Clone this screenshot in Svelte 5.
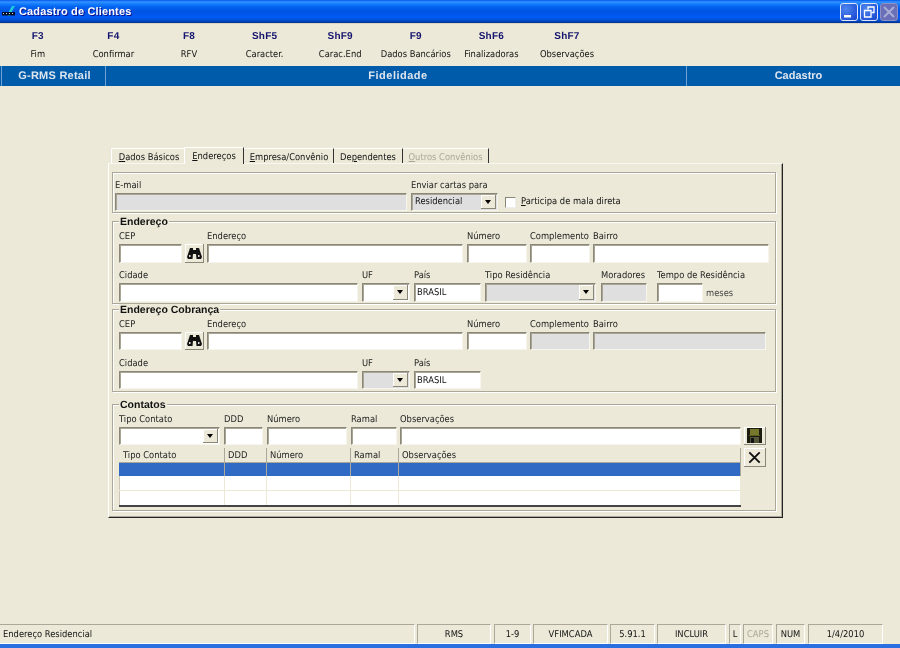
<script>
  const keys = [['F3','Fim'],['F4','Confirmar'],['F8','RFV'],['ShF5','Caracter.'],['ShF9','Carac.End'],['F9','Dados Bancários'],['ShF6','Finalizadoras'],['ShF7','Observações']];
  const base = 119;
  const addr1 = [
    {l:'CEP',x:119,w:63},{k:'find',x:185,w:19},{l:'Endereço',x:207,w:256},{l:'Número',x:467,w:60},{l:'Complemento',x:530,w:60},{l:'Bairro',x:593,w:176}
  ];
  const addr2 = [
    {l:'Cidade',x:119,w:239},{l:'UF',x:362,w:48,k:'combo'},{l:'País',x:414,w:67,v:'BRASIL'},{l:'Tipo Residência',x:485,w:111,k:'combo',d:true},{l:'Moradores',x:601,w:46,d:true},{l:'Tempo de Residência',x:657,w:46},{k:'unit',x:706,w:30,v:'meses'}
  ];
  const cob1 = [
    {l:'CEP',x:119,w:63},{k:'find',x:185,w:19},{l:'Endereço',x:207,w:256},{l:'Número',x:467,w:60},{l:'Complemento',x:530,w:60,d:true},{l:'Bairro',x:593,w:173,d:true}
  ];
  const cob2 = [
    {l:'Cidade',x:119,w:239},{l:'UF',x:362,w:48,k:'combo',d:true},{l:'País',x:414,w:67,v:'BRASIL'}
  ];
  const cont = [
    {l:'Tipo Contato',x:119,w:101,k:'combo'},{l:'DDD',x:224,w:39},{l:'Número',x:267,w:80},{l:'Ramal',x:351,w:46},{l:'Observações',x:400,w:341},{k:'save',x:744,w:22}
  ];
  const cols = [['Tipo Contato',106],['DDD',42],['Número',84],['Ramal',48],['Observações',342]];
  const status = [['RMS',74],['1-9',37],['VFIMCADA',75],['5.91.1',45],['INCLUIR',69],['L',12],['CAPS',30,true],['NUM',29],['1/4/2010',75]];
  const gaps = [2,3,2,2,2,3,2,3,3];
  function offset(row, i, start = base) {
    const prev = i === 0 ? start : row[i-1].x + row[i-1].w;
    return row[i].x - prev;
  }
</script>

{#snippet binoculars()}
  <svg width="15" height="13" viewBox="0 0 15 13">
    <path d="M3 1h3v2h3V1h3l1 3 2 6-1 2H9.500L9 7H6l-.5 5H1L0 10l2-6z" fill="#111"/>
    <path d="M2 8h1.500v2H2zM11 8h1.500v2H11z" fill="#ddd"/>
  </svg>
{/snippet}

{#snippet row(items, start = base)}
  <div class="row">
    {#each items as f, i}
      <div class="field" style="margin-left:{offset(items, i, start)}px;width:{f.w}px">
        <div class="lab">{f.l ?? ''}</div>
        {#if f.k === 'find'}
          <div class="btn find">{@render binoculars()}</div>
        {:else if f.k === 'save'}
          <div class="btn save">
            <svg width="15" height="15" viewBox="0 0 15 15">
              <path d="M0 0h15v15H0z" fill="#1c1c10"/>
              <path d="M3 1h9v6H3z" fill="#78782c"/>
              <path d="M2 7h11v1H2z" fill="#5c5c20"/>
              <path d="M3 9h9v6H3z" fill="#55553a"/>
              <path d="M4 10h3v5H4z" fill="#111"/>
            </svg>
          </div>
        {:else if f.k === 'unit'}
          <div class="unit">{f.v}</div>
        {:else if f.k === 'combo'}
          <div class="input combo" class:dis={f.d}><span class="arrowbox"><i></i></span></div>
        {:else}
          <div class="input" class:dis={f.d}>{f.v ?? ''}</div>
        {/if}
      </div>
    {/each}
  </div>
{/snippet}

<div class="win">
  <header class="title">
    <svg class="logo" width="16" height="18" viewBox="0 0 16 18">
      <path d="M7 10L11 3h3L10 10l-1 3H7z" fill="#20c8d8"/>
      <path d="M1 9h13v3.500H1z" fill="#08102c"/>
      <path d="M2 10h1v1H2zM5 10h1v1H5zM8 10h1v1H8zM11 10h1v1h-1z" fill="#c8dcea"/>
    </svg>
    <span class="ttext">Cadastro de Clientes</span>
    <div class="wbtns">
      <div class="wb"><svg width="18" height="18" viewBox="0 0 18 18"><path d="M4 12h7v2.500H4z" fill="#fff"/></svg></div>
      <div class="wb"><svg width="18" height="18" viewBox="0 0 18 18"><g fill="none" stroke="#fff" stroke-width="1.300"><path d="M8 6.500V4h6v5.500h-2.500"/><path d="M4.500 7.500H11V14H4.500z"/></g></svg></div>
      <div class="wb off"><svg width="18" height="18" viewBox="0 0 18 18"><path d="M4 4l10 10M14 4L4 14" stroke="#a9acd4" stroke-width="2"/></svg></div>
    </div>
  </header>

  <nav class="tools">
    {#each keys as [k, c]}
      <div class="tool"><b>{k}</b><span>{c}</span></div>
    {/each}
  </nav>

  <div class="bar">
    <div class="bc b1">G-RMS Retail</div>
    <div class="bc b2">Fidelidade</div>
    <div class="bc b3">Cadastro</div>
  </div>

  <main class="main">
    <div class="tabs">
      <div class="tab t1"><u>D</u>ados Básicos</div>
      <div class="tab t2 on"><u>E</u>ndereços</div>
      <div class="tab t3"><u>E</u>mpresa/Convênio</div>
      <div class="tab t4">De<u>p</u>endentes</div>
      <div class="tab t5 off"><u>O</u>utros Convênios</div>
    </div>
    <section class="panel">
      <div class="group g-mail">
        <div class="mailrow">
          <div class="field f-mail"><div class="lab">E-mail</div><div class="input dis"></div></div>
          <div class="field f-env"><div class="lab">Enviar cartas para</div><div class="input combo dis val">Residencial<span class="arrowbox"><i></i></span></div></div>
          <div class="chk"><span class="box"></span><span><u>P</u>articipa de mala direta</span></div>
        </div>
      </div>
      <div class="group g-end">
        <div class="leg">Endereço</div>
        {@render row(addr1)}
        {@render row(addr2)}
      </div>
      <div class="group g-cob">
        <div class="leg">Endereço Cobrança</div>
        {@render row(cob1)}
        {@render row(cob2)}
      </div>
      <div class="group g-con">
        <div class="leg">Contatos</div>
        {@render row(cont)}
        <div class="gridrow">
          <div class="grid">
            <div class="gr head">{#each cols as [t, w]}<div class="c" style="width:{w}px">{t}</div>{/each}</div>
            <div class="gr sel">{#each cols as [t, w]}<div class="c" style="width:{w}px"></div>{/each}</div>
            <div class="gr r1">{#each cols as [t, w]}<div class="c" style="width:{w}px"></div>{/each}</div>
            <div class="gr r2">{#each cols as [t, w]}<div class="c" style="width:{w}px"></div>{/each}</div>
          </div>
          <div class="btn del">
            <svg width="13" height="13" viewBox="0 0 15 15"><path d="M1.500 1.500l12 12M13.500 1.500l-12 12" stroke="#111" stroke-width="2.200"/></svg>
          </div>
        </div>
      </div>
    </section>
  </main>

  <footer class="status">
    <div class="sp first">Endereço Residencial</div>
    {#each status as [t, w, off], i}
      <div class="sp c" class:dim={off} style="width:{w}px;margin-left:{gaps[i]}px">{t}</div>
    {/each}
  </footer>
  <div class="taskbar"></div>
</div>

<style>
  :global(body) { margin: 0; background: #ece9d8; }
  .win {
    width: 900px; height: 648px; display: flex; flex-direction: column; overflow: hidden;
    background: #ece9d8; color: #111;
    font: 9.300px/12px "DejaVu Sans Condensed", "DejaVu Sans", Roboto, sans-serif;
    font-stretch: condensed;
    text-rendering: geometricPrecision;
    filter: blur(.3px);
  }
  .title {
    height: 23px; flex: none; display: flex; align-items: center; color: #fff;
    border-bottom: 1px solid #d8d4c4;
    background: linear-gradient(to bottom, #0058ee 0, #3593ff 2px, #127dff 4px, #0262ee 7px, #0054e3 11px, #0055eb 14px, #005bf5 17px, #0052d6 20px, #003092 23px);
  }
  .logo { margin-left: 1px; flex: none; }
  .ttext { margin-left: 2px; font: bold 11px/14px "Liberation Sans", Arial, sans-serif; letter-spacing: .15px; text-shadow: 1px 1px 0 #0f1089; }
  .wbtns { margin-left: auto; margin-right: 2px; display: flex; gap: 2px; }
  .wb {
    width: 18px; height: 18px; box-sizing: border-box; border: 1px solid #dfe6f8; border-radius: 3px;
    background: radial-gradient(circle at 30% 30%, #4f86ee, #2253d8 75%, #1c45c0); overflow: hidden;
    display: flex; align-items: center; justify-content: center;
  }
  .wb svg { flex: none; }
  .wb.off { background: #6a6fb8; border-color: #8c90c4; }
  .tools { height: 42px; flex: none; display: flex; }
  .tool { width: 75.6px; flex: none; display: flex; flex-direction: column; align-items: center; padding-top: 7px; box-sizing: border-box; }
  .tool b { color: #14146e; font: bold 10px/12px "Liberation Sans", Arial, sans-serif; letter-spacing: .2px; }
  .tool span { line-height: 12px; margin-top: 6px; color: #111; }
  .bar { height: 20px; flex: none; background: #005bab; color: #dfe6ee; display: flex; font: bold 11px/20px "Liberation Sans", Arial, sans-serif; }
  .bc { box-sizing: border-box; text-align: center; border-right: 1px solid #6ea0d2; }
  .b1 { border-left: 1px solid #6ea0d2; margin-left: 1px; width: 105px; letter-spacing: .25px; padding-left: 2px; }
  .b2 { width: 581px; padding-left: 4px; letter-spacing: .5px; }
  .b3 { flex: 1; border-right: 0; padding-left: 10px; }
  .main { flex: 1; min-height: 0; padding: 60px 0 0 108px; }
  .tabs { display: flex; height: 17px; align-items: flex-end; padding-left: 3px; }
  .tab { box-sizing: border-box; height: 15px; padding-top: 3px; text-align: center; border-top: 1px solid #fff; border-right: 1px solid #333; }
  .t1 { width: 73px; border-right: 0; border-left: 1px solid #fff; border-radius: 2px 0 0 0; padding-left: 2px; }
  .t2 { width: 60px; }
  .t3 { width: 90px; padding-left: 1px; }
  .t4 { width: 69px; }
  .t5 { width: 86px; }
  .on { height: 17px; padding-top: 3px; border-left: 1px solid #fff; position: relative; top: 1px; background: #ece9d8; }
  .off { color: #aca899; }
  .panel {
    box-sizing: border-box; width: 675px; height: 355px; padding: 8px 6px 0 3px;
    border: 1px solid #fff; border-right: 1px solid #222; border-bottom: 1px solid #222; border-top-color: #f8f7f0;
    box-shadow: inset -1px -1px 0 #aca899;
  }
  .group { position: relative; box-sizing: border-box; width: 664px; border: 1px solid #aca899; box-shadow: 1px 1px 0 #fff, inset 1px 1px 0 #fff; }
  .g-mail { height: 41px; padding: 6px 0 0 2px; }
  .g-end { height: 83px; margin-top: 8px; padding: 8px 0 0 6px; }
  .g-cob { height: 83px; margin-top: 5px; padding: 8px 0 0 6px; }
  .g-con { height: 107px; margin-top: 12px; padding: 8px 0 0 6px; }
  .g-cob .input, .g-cob .btn, .g-con .input, .g-con .btn { height: 18px; }
  .leg { position: absolute; left: 6px; top: -6px; padding: 0 1px; background: #ece9d8; font: bold 10.500px/12px "Liberation Sans", Arial, sans-serif; color: #111; }
  .row { display: flex; height: 33px; margin-bottom: 6px; }
  .field { flex: none; box-sizing: border-box; }
  .lab { height: 14px; white-space: nowrap; color: #222; padding-top: 1px; box-sizing: border-box; }
  .input {
    box-sizing: border-box; height: 19px; background: #fff; position: relative;
    border: 1px solid; border-color: #8a8778 #f6f5ee #f6f5ee #8a8778;
    box-shadow: inset 1px 1px 0 #a8a595;
    padding: 3px 0 0 2px; line-height: 12px; color: #111;
  }
  .dis { background: #dfdfdf; }
  .arrowbox {
    position: absolute; right: 1px; top: 1px; bottom: 1px; width: 15px; background: #ece9d8;
    border-right: 1px solid #8a8778; border-bottom: 1px solid #8a8778; box-shadow: inset 1px 1px 0 #fff;
    box-sizing: border-box; display: flex; align-items: center; justify-content: center;
  }
  .arrowbox i { width: 0; height: 0; border: 3.500px solid transparent; border-top: 4px solid #000; border-bottom: 0; }
  .btn {
    box-sizing: border-box; height: 19px; background: #ece9d8; display: flex; align-items: center; justify-content: center;
    border-right: 1px solid #8a8778; border-bottom: 1px solid #8a8778; box-shadow: inset 1px 1px 0 #fff;
  }
  .unit { padding: 5px 0 0; color: #444; }
  .mailrow { display: flex; }
  .f-mail { width: 292px; }
  .f-mail .input { height: 18px; }
  .f-env { width: 87px; margin-left: 4px; }
  .val { padding: 2px 0 0 3px; }
  .f-env .input { height: 18px; }
  .chk { display: flex; align-items: center; gap: 5px; margin: 16px 0 0 7px; height: 14px; color: #111; white-space: nowrap; }
  .box { width: 11px; height: 11px; box-sizing: border-box; background: #fff; border: 1px solid #8a8778; border-right-color: #eee; border-bottom-color: #eee; }
  .gridrow { display: flex; gap: 3px; margin-top: -4px; align-items: flex-start; }
  .grid { width: 622px; height: 59px; box-sizing: border-box; background: #fff; border-bottom: 2px solid #444; box-shadow: inset 1px 1px 0 #c8c5b5; }
  .gr { display: flex; box-sizing: border-box; border-bottom: 1px solid #ece9d8; }
  .gr .c { box-sizing: border-box; flex: none; border-right: 1px solid #ece9d8; }
  .head { background: #ece9d8; border-bottom: 1px solid #aca899; color: #222; height: 15px; }
  .head .c { padding: 2px 0 0 3px; border-right: 1px solid #aca899; }
  .head .c:first-child { padding-left: 4px; }
  .sel { background: #316ac5; height: 13px; border-bottom: 0; }
  .sel .c { border-right: 1px solid #aca899; }
  .r1 { height: 15px; }
  .r2 { height: 14px; border-bottom: 0; }
  .del { width: 22px; }
  .g-con .del { height: 19px; }
  .status { height: 20px; flex: none; display: flex; margin-top: auto; }
  .sp { box-sizing: border-box; height: 20px; border: 1px solid; border-color: #aca899 #fff #fff #aca899; line-height: 19px; color: #111; flex: none; }
  .sp.first { width: 415px; padding-left: 3px; border-left: 0; color: #111; }
  .sp.c { text-align: center; }
  .dim { color: #aca899; }
  .taskbar { height: 4px; flex: none; background: #2a6fe0; }
</style>
